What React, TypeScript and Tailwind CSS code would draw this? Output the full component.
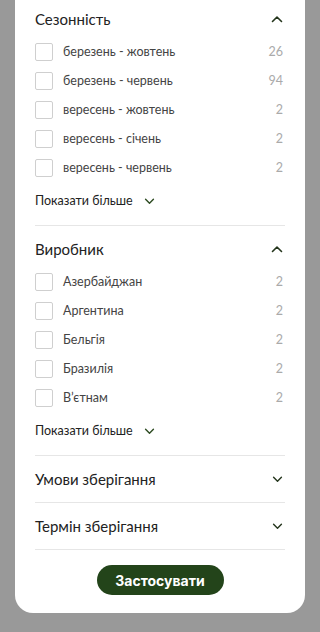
import React from 'react';

type Item = { label: string; count: number };

const seasons: Item[] = [
  { label: 'березень - жовтень', count: 26 },
  { label: 'березень - червень', count: 94 },
  { label: 'вересень - жовтень', count: 2 },
  { label: 'вересень - січень', count: 2 },
  { label: 'вересень - червень', count: 2 },
];

const makers: Item[] = [
  { label: 'Азербайджан', count: 2 },
  { label: 'Аргентина', count: 2 },
  { label: 'Бельгія', count: 2 },
  { label: 'Бразилія', count: 2 },
  { label: 'В’єтнам', count: 2 },
];

function Chevron({ up, className }: { up?: boolean; className?: string }) {
  return (
    <svg viewBox="0 0 12 8" className={className} fill="none" stroke="currentColor" strokeWidth="1.6" strokeLinecap="round" strokeLinejoin="round">
      {up ? <path d="M1.5 6.5 6 2l4.5 4.5" /> : <path d="M1.5 1.5 6 6l4.5-4.5" />}
    </svg>
  );
}

function OpenSection({ title, items, first }: { title: string; items: Item[]; first?: boolean }) {
  return (
    <div className={`${first ? 'pt-[8px]' : 'pt-[12px] border-t border-[#e6e6e6]'} pb-[14px]`}>
      <div className="flex h-[22px] items-center justify-between">
        <span className="text-[15px] text-[#222]">{title}</span>
        <Chevron up className="mr-[2px] h-[8px] w-[12px] text-[#24351c]" />
      </div>
      <div className="mt-[13px] flex flex-col gap-[11px]">
        {items.map((it) => (
          <label key={it.label} className="flex h-[18px] items-center">
            <span className="h-[18px] w-[18px] shrink-0 rounded-[2px] border border-[#cfcfcf] bg-white" />
            <span className="ml-[10px] flex-1 text-[12.5px] text-[#444]">{it.label}</span>
            <span className="mr-[2px] text-[12.5px] text-[#aaa]">{it.count}</span>
          </label>
        ))}
      </div>
      <button className="mt-[14px] flex h-[20px] items-center gap-[11px] text-[12.5px] text-[#222]">
        Показати більше
        <Chevron className="h-[7px] w-[11px] text-[#2c4a20]" />
      </button>
    </div>
  );
}

function ClosedSection({ title }: { title: string }) {
  return (
    <div className="flex h-[47px] items-center justify-between border-t border-[#e6e6e6] pt-[1px]">
      <span className="text-[15px] text-[#222]">{title}</span>
      <Chevron className="mr-[2px] h-[7px] w-[11px] text-[#24351c]" />
    </div>
  );
}

export default function App() {
  return (
    <div className="min-h-[632px] bg-[#999999] font-['Lato',sans-serif]">
      <div className="mx-[15px] rounded-b-[18px] bg-white px-[20px] pb-[18px]">
        <OpenSection title="Сезонність" items={seasons} first />
        <OpenSection title="Виробник" items={makers} />
        <ClosedSection title="Умови зберігання" />
        <ClosedSection title="Термін зберігання" />
        <div className="flex justify-center border-t border-[#e6e6e6] pt-[15px]">
          <button className="h-[30px] w-[127px] rounded-full bg-[#23441a] font-['Inter',sans-serif] text-[14px] font-bold text-white">
            Застосувати
          </button>
        </div>
      </div>
    </div>
  );
}
